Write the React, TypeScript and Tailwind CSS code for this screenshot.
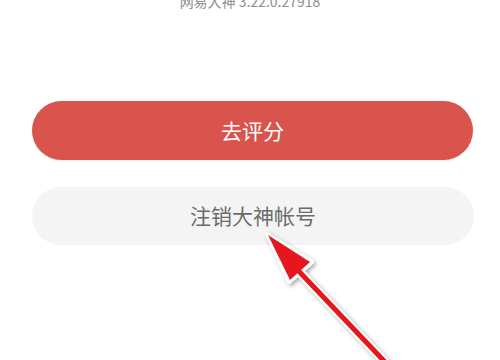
export default function App() {
  return (
    <div
      className="relative w-[500px] h-[360px] overflow-hidden bg-white"
      style={{ fontFamily: '"Noto Sans CJK SC", "Liberation Sans", sans-serif' }}
    >
      {/* Version line, clipped at the top */}
      <div className="mt-[-8px] text-center text-[14px] leading-[18px] text-[#8f8f8f]">
        网易大神 3.22.0.27918
      </div>

      <div className="flex flex-col gap-[27px] px-[32px] pt-[91px]">
        <button className="h-[59px] w-[441px] rounded-full bg-[#d9544c] text-[21px] text-white shadow-[0_1px_3px_rgba(0,0,0,0.08)]">
          去评分
        </button>
        <button className="h-[58px] w-[442px] rounded-full bg-[#f4f4f4] text-[21px] text-[#6b6b6b]">
          注销大神帐号
        </button>
      </div>

      {/* Red annotation arrow */}
      <svg className="absolute left-0 top-0" width="500" height="360" viewBox="0 0 500 360">
        <defs>
          <filter id="sh" x="-20%" y="-20%" width="140%" height="140%">
            <feDropShadow dx="2" dy="2" stdDeviation="2" floodColor="#000" floodOpacity="0.35" />
          </filter>
        </defs>
        <g filter="url(#sh)">
          <line x1="385" y1="362" x2="290" y2="262" stroke="#fff" strokeWidth="9" strokeLinecap="round" />
          <polygon points="267,234 312,262 289,282" fill="#fff" stroke="#fff" strokeWidth="4" strokeLinejoin="round" />
          <line x1="385" y1="362" x2="292" y2="264" stroke="#e5171c" strokeWidth="5" strokeLinecap="round" />
          <polygon points="268,235 310,262 290,280" fill="#e5171c" />
        </g>
      </svg>
    </div>
  )
}
